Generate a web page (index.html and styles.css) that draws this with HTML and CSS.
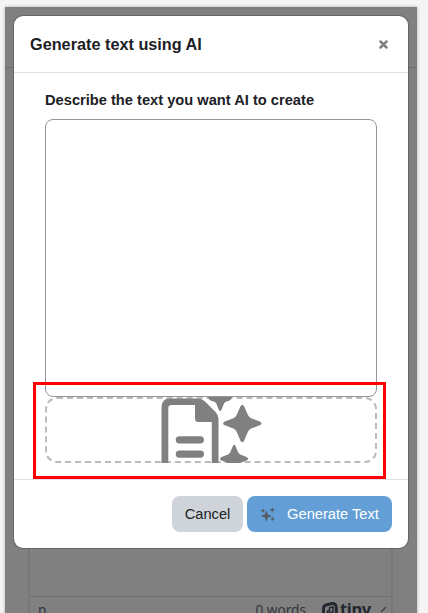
FILE: index.html
```html
<!DOCTYPE html>
<html lang="en">
  <head>
    <meta charset="UTF-8" />
    <title>Generate text using AI</title>
    <link rel="stylesheet" href="styles.css">
  </head>
  <body>
    <div class="page">
      <div class="page-header"></div>
      <div class="editor">
        <div class="editor-area"></div>
        <div class="statusbar">
          <span class="path">p</span>
          <span class="words">0 words</span>
          <span class="brand">
            <svg width="16" height="16" viewBox="0 0 16 16">
              <path d="M4 3 10 1.500Q14.300 1.200 14.300 6V10Q14.300 12.500 12 13L5 15Q1.500 15 1.500 11V6.500Q1.500 3.800 4 3Z" fill="none" stroke="#22272f" stroke-width="2.900" />
              <path d="M7.500 5.800 11 5v5L5.500 11.500V9H7.500Z" fill="none" stroke="#22272f" stroke-width="1.500" />
            </svg>
            <b>tiny</b>
          </span>
          <svg class="resize" width="8" height="10" viewBox="0 0 8 10">
            <path d="M1 8 6 3" stroke="#3a3f45" stroke-width="1.300" />
          </svg>
        </div>
      </div>
    </div>

    <div class="modal">
      <div class="modal-header">
        <h5>Generate text using AI</h5>
        <button class="close" aria-label="Close">
          <svg width="9" height="9" viewBox="0 0 9 9">
            <path d="M1.500 1.500 7.500 7.500M7.500 1.500 1.500 7.500" stroke="#7f7f7f" stroke-width="2.500" stroke-linecap="round" />
          </svg>
        </button>
      </div>
      <div class="modal-body">
        <label for="prompt">Describe the text you want AI to create</label>
        <textarea id="prompt"></textarea>
        <div class="preview">
          <svg width="104" height="66" viewBox="0 0 104 66">
            <g fill="#808080">
              <path fill-rule="evenodd" d="M9.500 1.500H38Q42 1.500 45 4.500L55.500 15Q58.500 18 58.500 22V66H51.800V25H38.500Q35 25 35 21.500V8H11.500Q8.300 8 8.300 11.200V66H1.500V11Q1.500 1.500 9.500 1.500Z" />
              <rect x="15.700" y="39.200" width="28.300" height="7.300" rx="3.650" />
              <rect x="15.700" y="53.400" width="28.300" height="7.300" rx="3.650" />
              <path d="M80.500 9.200Q82.300 6.200 84.100 9.200L88.100 18.200Q89 20.400 91.200 21.200L99.800 24.600Q103.200 26.400 99.800 28.200L91.200 31.600Q89 32.400 88.100 34.600L84.100 43.800Q82.300 46.800 80.500 43.800L76.500 34.600Q75.600 32.400 73.400 31.600L64.800 28.200Q61.400 26.400 64.800 24.600L73.400 21.200Q75.600 20.400 76.500 18.200Z" />
              <path d="M48 0H72Q71.500 2.700 69.500 3.400L66 4.700Q64.500 5.300 63.900 6.700L61.600 12.500Q60.100 15.500 58.700 12.500L56.400 6.700Q55.800 5.300 54.300 4.700L50.500 3.400Q48.500 2.700 48 0Z" />
              <path d="M72.800 49.200Q74.200 46.400 75.600 49.200L78.100 55.200Q78.700 56.800 80.300 57.400L86.500 60Q89.800 61.900 86.500 63.500L80 66H68L61.500 63.500Q58.500 61.900 61.500 60L68 57.400Q69.600 56.800 70.200 55.200Z" />
            </g>
          </svg>
        </div>
        <div class="highlight"></div>
      </div>
      <div class="modal-footer">
        <button class="btn btn-cancel">Cancel</button>
        <button class="btn btn-generate">
          <svg width="16" height="16" viewBox="0 0 16 16">
            <g fill="#555b63">
              <path d="M6.400 4.200 7.500 7.700 11.200 9 7.500 10.300 6.400 13.800 5.300 10.300 1.600 9 5.300 7.700Z" stroke="#555b63" stroke-width=".800" stroke-linejoin="round" />
              <path d="M12.300 0 13 2.100 15.100 2.900 13 3.700 12.300 5.700 11.500 3.700 9.500 2.900 11.500 2.100Z" />
              <path d="M3 1.300 3.700 3 5.400 3.700 3.700 4.400 3 6 2.300 4.400.7 3.700 2.300 3Z" />
              <path d="M12.500 9.400 13.200 11.100 15 11.900 13.200 12.600 12.500 14.300 11.700 12.600 10.200 11.900 11.700 11.100Z" />
            </g>
          </svg>
          <span>Generate Text</span>
        </button>
      </div>
    </div>
  </body>
</html>
```
FILE: styles.css
```css
* {
  box-sizing: border-box;
}

body {
  margin: 0;
  padding: 7px 11px 0 5px;
  height: 613px;
  overflow: hidden;
  position: relative;
  background: #f4f4f4;
  color: #1d2125;
  font-family: "Liberation Sans", Arial, sans-serif;
  font-size: 15px;
}

/* dimmed page behind the dialog */
.page {
  height: 620px;
  background: #808080;
  box-shadow: 0 0 3px rgba(0, 0, 0, 0.3);
}

.page-header {
  height: 61px;
  border-bottom: 1px solid #707070;
}

.editor {
  margin: 0 24px 0 23px;
  border: 2px solid #777;
  border-top: none;
  border-bottom: none;
}

.editor-area {
  height: 528px;
}

.statusbar {
  display: flex;
  align-items: flex-start;
  height: 30px;
  padding: 3px 3px 0 8px;
  border-top: 1px solid #707070;
  color: #31363c;
  font: 13.6px/20px "Noto Sans", sans-serif;
}

.path {
  flex: 1;
}

.brand {
  display: flex;
  margin: 0 9px 0 16px;
  color: #22272f;
}

.brand svg {
  margin: 2px 2px 0 0;
}

.brand b {
  font: bold 16.5px/18px "Noto Sans", sans-serif;
  letter-spacing: -0.3px;
}

.resize {
  margin-top: 4px;
}

.modal {
  position: absolute;
  top: 15px;
  left: 13px;
  width: 396px;
  height: 534px;
  display: flex;
  flex-direction: column;
  background: #fff;
  background-clip: padding-box;
  border: 1px solid rgba(0, 0, 0, 0.2);
  border-radius: 10px;
}

.modal-header {
  display: flex;
  align-items: center;
  justify-content: space-between;
  height: 57px;
  padding: 0 20px 0 16px;
  border-bottom: 1px solid #dee2e6;
}

.modal-header h5 {
  margin: 0;
  font-size: 16.25px;
}

.close {
  display: flex;
  padding: 0;
  border: none;
  background: none;
}

.modal-body {
  position: relative;
  height: 406px;
  padding: 18px 31px 0;
}

.modal-body label {
  display: block;
  height: 28px;
  font-size: 14.66px;
  font-weight: bold;
  line-height: 18px;
}

textarea {
  display: block;
  width: 100%;
  height: 278px;
  border: 1px solid #8f959e;
  border-radius: 8px;
  background: #fff;
  resize: none;
}

.preview {
  display: flex;
  justify-content: center;
  height: 66px;
  border: 2px dashed #bbb;
  border-radius: 12px;
}

.preview svg {
  flex: none;
  margin: -2px 0 0 1px;
}

/* red frame drawn over the preview area */
.highlight {
  position: absolute;
  top: 309px;
  left: 19px;
  width: 353px;
  height: 97px;
  border: 3px solid #f00;
}

.modal-footer {
  display: flex;
  flex: 1;
  justify-content: flex-end;
  gap: 4px;
  padding: 16px 16px 0;
  border-top: 1px solid #dee2e6;
}

.btn {
  display: flex;
  align-items: center;
  justify-content: center;
  height: 36px;
  padding: 0 0 1px;
  border: none;
  border-radius: 8px;
  font: 14.66px "Liberation Sans", Arial, sans-serif;
}

.btn-cancel {
  width: 71px;
  background: #ced4da;
  color: #1d2125;
}

.btn-generate {
  width: 145px;
  gap: 11px;
  background: #639fd6;
  color: #fff;
}

.btn-generate svg {
  margin-top: 2px;
}
```
